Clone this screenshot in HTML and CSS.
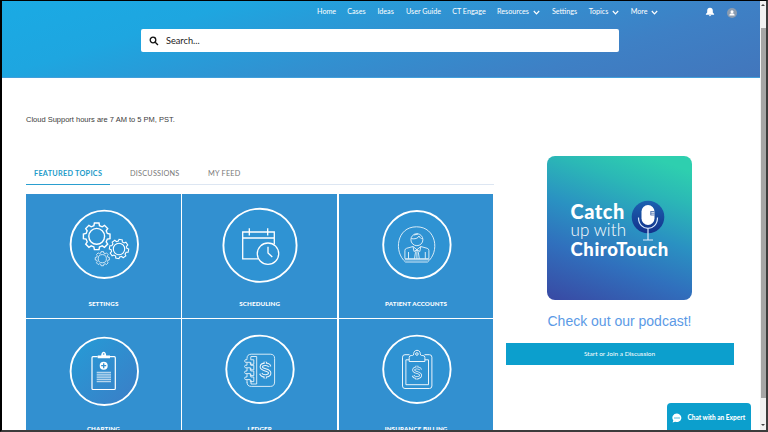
FILE: index.html
```html
<!DOCTYPE html>
<html lang="en">
<head>
<meta charset="utf-8">
<title>Support Community</title>
<link rel="stylesheet" href="styles.css">
</head>
<body>
<div class="page">
  <header class="hero">
    <nav class="nav">
      <a class="active">Home</a><a>Cases</a><a class="ideas">Ideas</a><a class="guide">User Guide</a><a class="engage">CT Engage</a>
      <a class="res">Resources <svg class="chev" viewBox="0 0 7 5"><path d="M.8 1l2.7 2.8L6.2 1"/></svg></a>
      <a class="set">Settings</a>
      <a class="top">Topics <svg class="chev" viewBox="0 0 7 5"><path d="M.8 1l2.7 2.8L6.2 1"/></svg></a>
      <a class="more">More <svg class="chev" viewBox="0 0 7 5"><path d="M.8 1l2.7 2.8L6.2 1"/></svg></a>
      <svg class="bell" viewBox="0 0 10 10"><path d="M5 .7C3.2.7 2.2 2 2.2 3.6v2L.9 7v.7h8.2V7L7.8 5.600v-2C7.800 2 6.800.7 5 .7zM3.800 8.300h2.400C6 9.500 4 9.500 3.800 8.300z" fill="#fff"/></svg>
      <svg class="avatar" viewBox="0 0 10 10"><circle cx="5" cy="5" r="5" fill="#8b9cb0"/><circle cx="5" cy="3.700" r="1.500" fill="#fff"/><path d="M2.300 7.500c0-3 5.400-3 5.400 0z" fill="#fff"/></svg>
    </nav>
    <div class="search">
      <svg viewBox="0 0 10 10"><circle cx="4" cy="4" r="2.800"/><path d="M6.200 6.200L9 9"/></svg>
      <span>Search...</span>
    </div>
  </header>
  <main class="main">
    <p class="hours">Cloud Support hours are 7 AM to 5 PM, PST.</p>
    <div class="columns">
      <section class="left">
        <div class="tabs"><span class="tab on">FEATURED TOPICS</span><span class="tab disc">DISCUSSIONS</span><span class="tab feed">MY FEED</span></div>
        <div class="tiles">
          <div class="tile">
            <svg viewBox="0 0 80 80">
              <defs><path id="gear" d="M-2.800-10.600L-2.300-13.300H2.300L2.800-10.600 5.500-9.500 7.800-11 11-7.800 9.500-5.500 10.600-2.800 13.300-2.300V2.300L10.600 2.800 9.500 5.500 11 7.800 7.800 11 5.500 9.500 2.800 10.600 2.300 13.300H-2.300L-2.800 10.600-5.500 9.500-7.800 11-11 7.800-9.500 5.500-10.600 2.800-13.300 2.300V-2.300L-10.600-2.800-9.500-5.500-11-7.800-7.800-11-5.500-9.500z"/></defs>
              <circle class="ring" cx="40.300" cy="39.300" r="33.700"/>
              <g stroke-width="1.400"><use href="#gear" x="32.700" y="31.300"/><circle cx="32.700" cy="31.300" r="7.900"/></g>
              <g stroke-width="1.100"><use href="#gear" stroke-width="1.500" transform="translate(55 44) rotate(10) scale(.72)"/><circle cx="55" cy="44" r="5.700"/></g>
              <g stroke-width=".9" opacity=".85"><use href="#gear" stroke-width="1.700" transform="translate(38.300 53.700) scale(.53)"/><circle cx="38.300" cy="53.700" r="4.100"/></g>
            </svg>
            <span>SETTINGS</span>
          </div>
          <div class="tile">
            <svg viewBox="0 0 80 80">
              <circle class="ring" cx="40" cy="40.300" r="36.600"/>
              <path stroke-width="1.300" d="M38 53.800H22.700V27H54.300V39M22.700 33H54.300M29.300 23.300v7.200M47.700 23.300v7.200"/>
              <circle stroke-width="1.300" cx="48" cy="48.700" r="10.700" fill="#2f93d3"/>
              <path stroke-width="1.300" d="M48 41.700V48l4.300 4"/>
            </svg>
            <span>SCHEDULING</span>
          </div>
          <div class="tile">
            <svg viewBox="0 0 80 80">
              <circle class="ring" cx="39.900" cy="39.700" r="33.700"/>
              <g stroke-width=".9" opacity=".9">
                <path d="M28.500 57H50.500C63 47 59.500 21.800 39.500 21.800S16.500 47 28.500 57zM27.900 54.800H51.900"/>
                <circle cx="39.900" cy="34.700" r="6"/>
                <path d="M34.200 33.700C38 34.200 41 33.500 42 31c.7 1.800 2 2.700 3.700 2.800M37 30l4-1"/>
                <path d="M27.900 53.700V45.500q0-1.700 1.700-2.200L36 41.500l3.900 3.200 3.900-3.200 6.400 1.800q1.700.5 1.700 2.200v8.200zM31.500 47v6.700M48.300 47v6.700M36 41.500l1 5 2.900-1.800 2.900 1.800 1-5M39.900 44.700l-1.400 2.500-1 6.500M39.900 44.700l1.400 2.500 1 6.500M39.900 47v6.700"/>
              </g>
            </svg>
            <span>PATIENT ACCOUNTS</span>
          </div>
          <div class="tile">
            <svg viewBox="0 0 80 80">
              <defs><linearGradient id="disc" x1="0" y1="0" x2="1" y2="1"><stop offset=".1" stop-color="#2799d5"/><stop offset="1" stop-color="#3c7dc6"/></linearGradient></defs>
              <circle class="ring" cx="40.300" cy="41.300" r="33.700" style="fill:url(#disc)"/>
              <path stroke-width="1.200" d="M33.700 26.700H29q-1 0-1 1V58.500q0 1 1 1H50.300q1 0 1-1V27.700q0-1-1-1H46"/>
              <path class="solid" d="M33.700 28.200v-2.600h3.500c0-5.200 5-5.200 5 0H46v2.600z"/><circle cx="39.700" cy="24" r=".8" fill="#3290d0" stroke="none"/>
              <circle class="solid" cx="39.700" cy="35.700" r="4"/><path stroke="#3290d0" stroke-width="1.300" d="M39.700 33.200v5M37.200 35.700h5"/>
              <path stroke-width=".8" d="M32.700 42.300H47M32.700 44.200H47M32.700 46H47M32.700 47.800H47M32.700 49.700H47M32.700 51.700H47"/>
            </svg>
            <span>CHARTING</span>
          </div>
          <div class="tile">
            <svg viewBox="0 0 80 80">
              <circle class="ring" cx="40" cy="39.300" r="33.700"/>
              <g stroke-width=".9" opacity=".9">
                <path d="M27 28.500q0-4.300 4.300-4.300H50.300q4.300 0 4.300 4.300V52q0 4.400-4.300 4.400H31.300Q27 56.400 27 52M36.700 26.500V54M31 26.500h5.700M31 54h5.700"/>
                <path d="M27 28.500v1.200h-1.700q-1.500 1.300 0 2.600h5v2h3.500v-4.500h-3v-3.300M27 32.500v2.700h-1.700q-1.500 1.300 0 2.600h5v2h3.500v-4.500h-3v-3M27 38v3h-1.700q-1.500 1.300 0 2.600h5v2h3.500V41h-3v-3.200M27 44v3h-1.700q-1.500 1.300 0 2.600h5v2h3.500V47h-3v-3.300M27 50v2.500M31 50v4"/>
              </g>
              <g transform="translate(-9.100 -8) scale(1.200)">
                <path class="d-out" d="M49 37.200c-.8-2.600-6.800-2.700-7 .2-.1 3.200 7 1.800 7 5.200 0 3-6.300 3.200-7.500.2M45.300 35.500v-2.300M45.300 44.800v2.300"/>
                <path class="d-in" d="M49 37.200c-.8-2.600-6.800-2.700-7 .2-.1 3.200 7 1.800 7 5.200 0 3-6.300 3.200-7.500.2M45.300 35.500v-2.300M45.300 44.800v2.300"/>
              </g>
            </svg>
            <span>LEDGER</span>
          </div>
          <div class="tile">
            <svg viewBox="0 0 80 80">
              <circle class="ring" cx="39.900" cy="39.300" r="33.700"/>
              <g stroke-width="1" opacity=".9">
                <path d="M32.500 24.700H28q-2.500 0-2.500 2.500V56q0 2.500 2.500 2.500H52.400q2.500 0 2.500-2.500V27.200q0-2.500-2.500-2.500H47.500M32.200 29.800H28.900V54.700H51.500V29.800H47.900"/>
                <path d="M32.200 31.500V27.500q0-2 2-2h1.300q1.200 0 1.200-1.800c0-4.500 6.600-4.500 6.600 0q0 1.800 1.200 1.800h1.400q2 0 2 2v4z"/><circle cx="39.900" cy="24" r="1.300"/>
              </g>
              <g transform="translate(-5.400 2.600)">
                <path class="d-out" d="M49 37.200c-.8-2.600-6.800-2.700-7 .2-.1 3.200 7 1.800 7 5.200 0 3-6.300 3.200-7.500.2M45.300 35.500v-2.300M45.300 44.800v2.300"/>
                <path class="d-in" d="M49 37.200c-.8-2.600-6.800-2.700-7 .2-.1 3.200 7 1.800 7 5.200 0 3-6.300 3.200-7.500.2M45.300 35.500v-2.300M45.300 44.800v2.300"/>
              </g>
            </svg>
            <span>INSURANCE BILLING</span>
          </div>
        </div>
      </section>
      <aside class="side">
        <div class="podcast">
          <div class="title"><b class="l1">Catch</b><span class="l2">up with</span><b class="l3">ChiroTouch</b></div>
          <svg class="mic" viewBox="0 0 34 42">
            <defs><linearGradient id="blue" x1="0" y1="0" x2="0" y2="1"><stop offset="0" stop-color="#1c62b0"/><stop offset="1" stop-color="#13318c"/></linearGradient></defs>
            <circle cx="17" cy="17" r="16.300" fill="url(#blue)"/>
            <rect x="10.500" y="5" width="13" height="20" rx="6.500" fill="#fff"/>
            <path d="M19.500 11.500h4M19.500 13.200h4M19.500 15h4M19.800 11.500v3.500" stroke="#3f66a8" stroke-width=".8"/>
            <path d="M7.500 17.500c0 14.500 19 14.500 19 0M17 28.500v11.300M12 40h10" fill="none" stroke="#dcecff" stroke-width="1.200"/>
          </svg>
        </div>
        <div class="check">Check out our podcast!</div>
        <div class="start">Start or Join a Discussion</div>
      </aside>
    </div>
  </main>
  <div class="chat">
    <svg viewBox="0 0 10 10"><path d="M5 .5a4.500 4.300 0 1 1-1.800 8.300L.6 9.500l.7-2.100A4.500 4.300 0 0 1 5 .5z" fill="#fff"/><g fill="#0c9fcd"><circle cx="3" cy="5" r=".65"/><circle cx="5" cy="5" r=".65"/><circle cx="7" cy="5" r=".65"/></g></svg>
    <span>Chat with an Expert</span>
  </div>
</div>
<div class="scroll"><i class="up"></i><div class="thumb"></div><i class="down"></i></div>
</body>
</html>
```

FILE: styles.css
```css
* { box-sizing: border-box; }
body {
  margin: 0; width: 768px; height: 432px; overflow: hidden; display: flex;
  border: solid #000; border-width: 1px 2px 2px 2px;
  border-right-color: #3c3c3c; border-bottom-color: #3c3c3c;
  background: #fff; font-family: Lato, sans-serif; white-space: nowrap;
}
.page { position: relative; width: 758px; height: 429px; overflow: hidden; }
.hero {
  height: 77px; border-bottom: 1px solid #429fdb;
  background: linear-gradient(163deg, #1aaae4 0%, #1ea6e0 24%, #3290d0 52%, #3e80c5 76%, #4276bc 100%);
}
.nav { display: flex; align-items: center; height: 21px; padding-left: 315px; color: #fff; font-size: 7.2px; }
.nav a { width: 30.2px; flex: none; }
.nav .ideas { width: 28.600px; }
.nav .guide { width: 46.2px; }
.nav .engage { width: 44.800px; }
.nav .res { width: 55px; }
.nav .set { width: 36.700px; }
.nav .top { width: 42px; }
.nav .more { width: 74.500px; }
.chev { width: 7px; height: 5px; margin-left: 2px; vertical-align: -.5px; fill: none; stroke: #fff; stroke-width: 1.2; }
.bell { width: 10px; height: 10px; }
.avatar { width: 10px; height: 10px; margin: 2px 0 0 11.500px; }
.search {
  display: flex; align-items: center; width: 478px; height: 23px; margin: 7px 0 0 139px; padding-left: 8px;
  border-radius: 2px; background: #fff; color: #222; font-size: 9.200px;
}
.search svg { width: 10px; height: 10px; margin-right: 7px; fill: none; stroke: #111; stroke-width: 1.300; }
.main { padding: 37px 0 0 24px; }
.hours { margin: 0; height: 10px; font: 7.500px/10px "Liberation Sans", sans-serif; color: #3c3c3c; }
.columns { display: flex; padding-top: 31px; }
.left { width: 467.500px; padding-top: 6px; }
.tabs { display: flex; height: 23px; border-bottom: 1px solid #dde6f2; font-size: 7.300px; line-height: 24px; color: #777; }
.tab { height: 22.500px; letter-spacing: .22px; }
.on { width: 84px; padding-left: 8px; border-bottom: 1.500px solid #2a9fd0; color: #1c9bc9; font-weight: 700; letter-spacing: .26px; }
.disc { margin-left: 20px; width: 78px; }
.tiles { display: grid; grid-template-columns: repeat(3, 1fr); grid-auto-rows: 123.500px; gap: 1.500px; margin-top: 9px; }
.tile { background: #3290d0; display: flex; flex-direction: column; align-items: center; padding-top: 11px; color: #fff; }
.tile svg { width: 80px; height: 80px; margin-left: 1px; fill: none; stroke: #fff; }
.tile .ring { fill: #2f93d3; stroke-width: 1.900; }
.tile .solid { fill: #fff; stroke: none; }
.tile .d-out { stroke-width: 2.800; opacity: .9; }
.tile .d-in { stroke: #3290d0; stroke-width: 1.100; }
.tile span { margin-top: 14px; font-size: 6.200px; line-height: 10px; font-weight: 900; letter-spacing: .13px; }
.side { width: 228px; margin-left: 12px; display: flex; flex-direction: column; align-items: center; }
.podcast {
  display: flex; width: 145px; height: 144px; border-radius: 8px; padding: 43px 0 0 23.500px; position: relative;
  background: linear-gradient(200deg, #2ecfaf 8%, #2bb8b6 25%, #2a91c2 48%, #3070bd 70%, #3949a3 100%);
  color: #fff;
}
.title { display: flex; flex-direction: column; font-weight: 900; }
.l1 { font-size: 20px; line-height: 25px; letter-spacing: .5px; margin-bottom: -3px; }
.l2 { font-size: 17px; line-height: 17px; font-weight: 300; letter-spacing: .1px; }
.l3 { font-size: 18.500px; line-height: 22px; letter-spacing: .6px; }
.mic { position: absolute; left: 84px; top: 44px; width: 34px; height: 42px; }
.check { margin-top: 12px; height: 18px; font: 14px/18px "Liberation Sans", sans-serif; color: #5b9ae6; }
.start { margin-top: 13px; width: 228px; height: 22px; background: #0c9fcd; color: #fff; font-size: 6.500px; line-height: 22px; text-align: center; }
.chat {
  position: absolute; left: 664.500px; bottom: 0; width: 84.500px; height: 27.500px; border-radius: 4px 4px 0 0;
  background: #0c9fcd; color: #fff; display: flex; align-items: center; padding: 3px 0 0 5px; font-size: 6.500px; font-weight: 900;
}
.chat svg { width: 10px; height: 10px; margin-right: 6px; }
.scroll { width: 6px; height: 429px; background: #f1f1f1; display: flex; flex-direction: column; align-items: center; }
.up, .down { border: 2px solid transparent; width: 0; height: 0; }
.up { border-bottom-color: #444; margin-top: 1px; }
.thumb { width: 5px; height: 370px; margin-top: 22px; background: #a6a6a6; }
.down { border-top-color: #444; margin-top: 26px; }
```
